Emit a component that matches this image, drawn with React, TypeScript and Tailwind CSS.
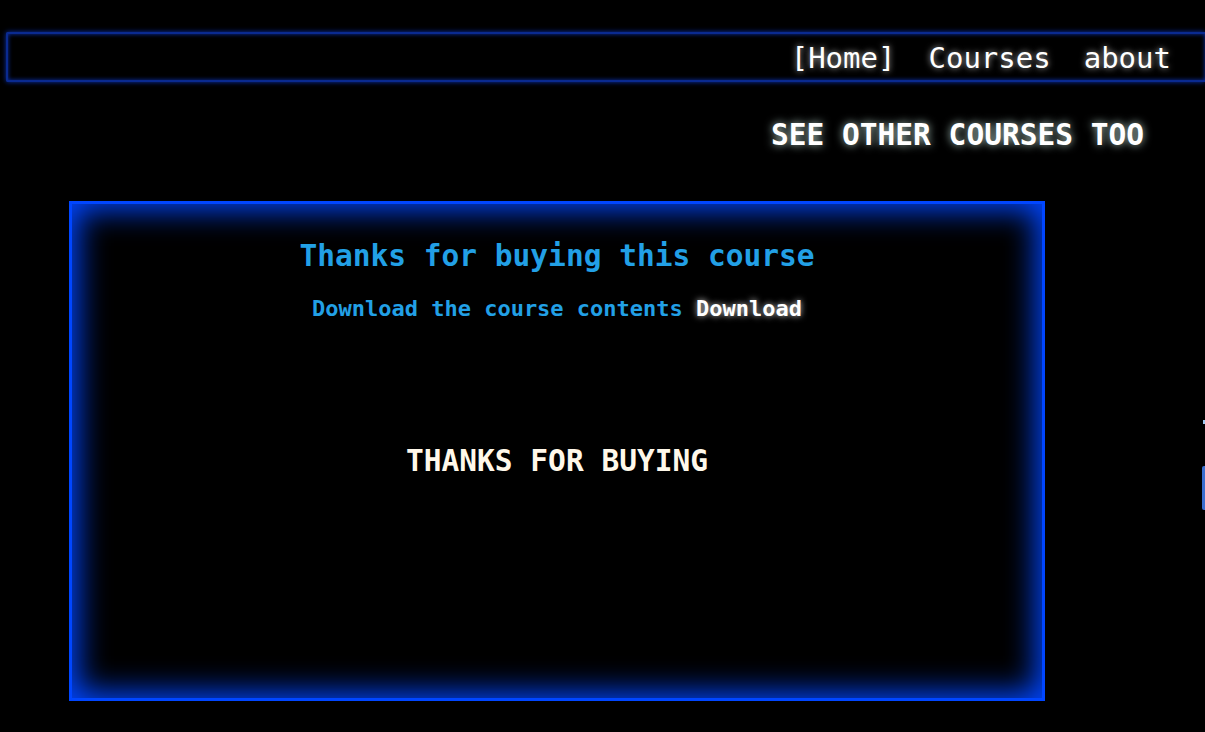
export default function App() {
  const mono = { fontFamily: '"DejaVu Sans Mono", "Liberation Mono", monospace' };
  return (
    <div className="relative min-h-[732px] overflow-hidden bg-black" style={mono}>
      <nav className="ml-[6px] mt-[32px] flex h-[50px] items-center justify-end gap-[33px] rounded-l-[2px] border-y-2 border-l-2 border-[#0a2a90] pr-[34px] shadow-[0_0_5px_#0a30b0,inset_0_0_4px_#0a30b0]">
        <a className="pt-[2px] text-[29px] leading-none text-white [text-shadow:0_0_6px_rgba(255,255,255,0.7)]">[Home]</a>
        <a className="pt-[2px] text-[29px] leading-none text-white [text-shadow:0_0_6px_rgba(255,255,255,0.7)]">Courses</a>
        <a className="pt-[2px] text-[29px] leading-none text-white [text-shadow:0_0_6px_rgba(255,255,255,0.7)]">about</a>
      </nav>

      <div className="flex justify-end pr-[61px] pt-[39px]">
        <a className="text-[29.5px] font-bold leading-none text-white [text-shadow:0_0_8px_rgba(220,255,245,0.8)]">
          SEE OTHER COURSES TOO
        </a>
      </div>

      <section className="ml-[69px] mt-[50px] flex h-[500px] w-[976px] flex-col items-center border-[3px] border-[#0046ff] pt-[38px] shadow-[inset_0_0_30px_6px_#0046ff]">
        <h1 className="text-[29.5px] font-bold leading-none text-[#22a0e6]">Thanks for buying this course</h1>
        <p className="mt-[27px] text-[22px] font-bold leading-none text-[#22a0e6]">
          Download the course contents{" "}
          <a className="text-white [text-shadow:0_0_6px_rgba(255,255,255,0.8)]">Download</a>
        </p>
        <p className="mt-[127px] text-[29.5px] font-bold leading-none text-[#fff8ea]">THANKS FOR BUYING</p>
      </section>

      <div className="absolute right-0 top-[420px] h-[4px] w-[2px] bg-[#9cc8f0]" />
      <div className="absolute right-0 top-[466px] h-[44px] w-[3px] rounded-l-[2px] bg-[#3b6fd0]" />
    </div>
  );
}
